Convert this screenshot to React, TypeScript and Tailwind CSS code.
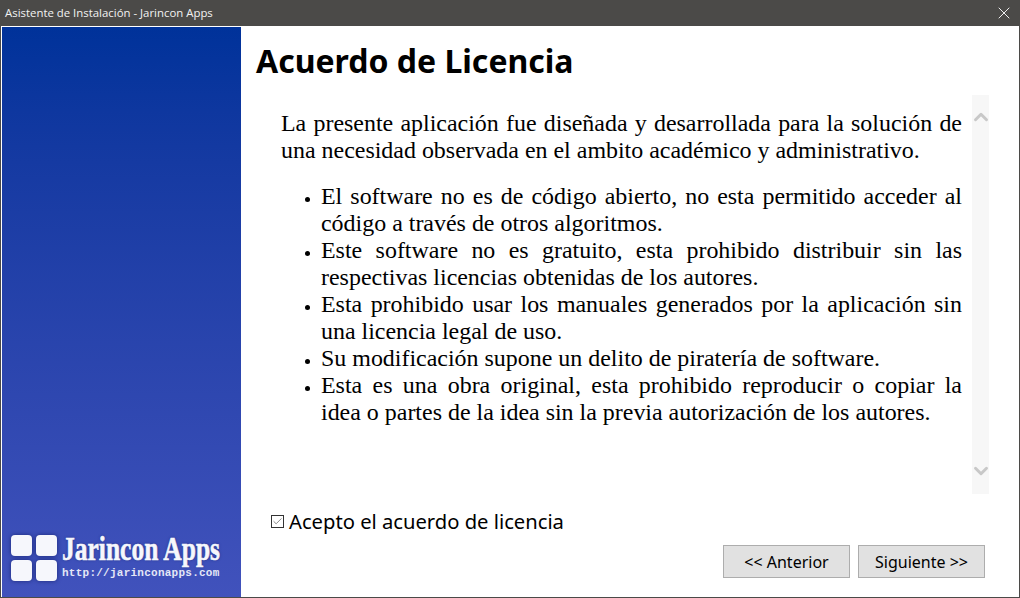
import { Check, ChevronDown, ChevronUp, X } from "lucide-react";

const bullets = [
  "El software no es de código abierto, no esta permitido acceder al código a través de otros algoritmos.",
  "Este software no es gratuito, esta prohibido distribuir sin las respectivas licencias obtenidas de los autores.",
  "Esta prohibido usar los manuales generados por la aplicación sin una licencia legal de uso.",
  "Su modificación supone un delito de piratería de software.",
  "Esta es una obra original, esta prohibido reproducir o copiar la idea o partes de la idea sin la previa autorización de los autores.",
];

function Logo() {
  return (
    <div className="flex items-start gap-[5px] pl-[9px]">
      <div className="grid grid-cols-[21px_21px] grid-rows-[21px_21px] gap-[4px]">
        {[0, 1, 2, 3].map((i) => (
          <div key={i} className="rounded-[4px] bg-[#f6f7fc] shadow-[0_0_4px_#1d2a78]" />
        ))}
      </div>
      <div className="-mt-[3px] flex flex-col">
        <div className="h-[33px] w-[158px] origin-left scale-x-[0.75] whitespace-nowrap font-['Liberation_Serif',serif] text-[34px] leading-[33px] font-bold text-[#f6f7fc] [-webkit-text-stroke:0.6px_#f6f7fc] [text-shadow:0_0_3px_#1d2a78]">
          Jarincon Apps
        </div>
        <div className="mt-[2px] whitespace-nowrap font-['Liberation_Mono',monospace] text-[11px] leading-[12px] font-bold tracking-[0.25px] text-[#e4e7f6]">
          http://jarinconapps.com
        </div>
      </div>
    </div>
  );
}

function WizardButton({ label }: { label: string }) {
  return (
    <button className="h-[33px] w-[127px] border border-[#adadad] bg-[#e1e1e1] font-['Noto_Sans',sans-serif] text-[16px] leading-none text-black">
      {label}
    </button>
  );
}

export default function App() {
  return (
    <div className="flex h-[598px] w-[1020px] flex-col overflow-hidden bg-[#4b4a48]">
      <div className="flex h-[26px] shrink-0 items-center justify-between pr-[6px] pl-[5px]">
        <span className="font-['Open_Sans',sans-serif] text-[11.4px] text-[#f2f2f2]">
          Asistente de Instalación - Jarincon Apps
        </span>
        <X size={20} strokeWidth={1.1} className="text-white" />
      </div>
      <div className="mr-px mb-px ml-px flex min-h-0 flex-1 bg-white pt-px pl-px">
        <aside className="flex h-full w-[239px] shrink-0 flex-col justify-end bg-gradient-to-b from-[#00329a] to-[#4152bc] pb-[16px]">
          <Logo />
        </aside>
        <main className="flex min-w-0 flex-1 flex-col pl-[15px]">
          <h1 className="mt-[14px] h-[40px] font-['Noto_Sans',sans-serif] text-[32px] leading-[40px] font-bold text-black">
            Acuerdo de Licencia
          </h1>
          <div className="mt-[14px] flex h-[399px] w-[733px]">
            <div className="w-[716px] pt-[15px] pl-[25px] font-['Liberation_Serif',serif] text-[23.95px] leading-[27px] text-black">
              <p className="w-[681px] text-justify">
                La presente aplicación fue diseñada y desarrollada para la solución de una necesidad observada en el ambito académico y administrativo.
              </p>
              <ul className="mt-[19px] w-[681px] list-disc pl-[40px] text-justify marker:text-[16px]">
                {bullets.map((item) => (
                  <li key={item}>{item}</li>
                ))}
              </ul>
            </div>
            <div className="flex w-[17px] flex-col items-center justify-between bg-[#f7f7f7] pt-[11px] pb-[12px] text-[#c8c8c8]">
              <ChevronUp size={22} strokeWidth={3.2} />
              <ChevronDown size={22} strokeWidth={3.2} />
            </div>
          </div>
          <label className="mt-[13px] ml-[15px] flex h-[28px] items-center gap-[5px] font-['Noto_Sans',sans-serif] text-[20.2px] text-black">
            <span className="flex h-[13px] w-[13px] items-center justify-center border border-[#333333] bg-white">
              <Check size={11} strokeWidth={1.5} className="text-[#555555]" />
            </span>
            Acepto el acuerdo de licencia
          </label>
          <div className="mt-[10px] flex justify-end gap-[8px] pr-[34px]">
            <WizardButton label="<< Anterior" />
            <WizardButton label="Siguiente >>" />
          </div>
        </main>
      </div>
    </div>
  );
}
